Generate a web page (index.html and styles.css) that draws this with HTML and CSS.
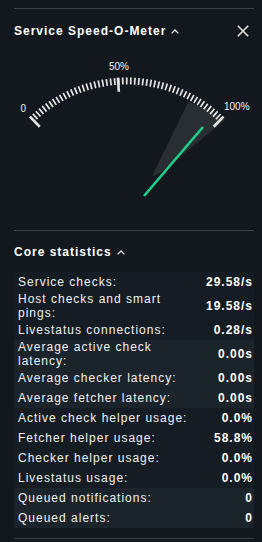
FILE: index.html
```html
<!DOCTYPE html>
<html lang="en">
<head>
    <meta charset="UTF-8"/>
    <meta name="viewport" content="width=device-width, initial-scale=1.0"/>
    <title>Sidebar</title>
    <link rel="stylesheet" href="styles.css">
</head>
<body>
<div class="sidebar">
    <div class="snapin speed">
        <div class="snapin-head">
            <span class="snapin-title">Service Speed-O-Meter
                <svg class="chevron" viewBox="0 0 8 5"><path d="M0.6 4.4 L4 1 L7.4 4.4"/></svg>
            </span>
            <svg class="close" viewBox="0 0 12 12"><path d="M0.8 0.8 L11.2 11.2 M11.2 0.8 L0.8 11.2"/></svg>
        </div>
        <svg class="speedometer" width="240" height="160" viewBox="0 0 240 160">
            <path class="optimal" d="M137.7 138.7 L174.3 63.7 A135 135 0 0 1 211 82 L146 135 Z"/>
            <path class="ticks" d="M18.41 81.2 A135.5 135.5 0 0 1 206.99 81.2"/>
            <line class="major" x1="15.97" y1="78.68" x2="25.71" y2="88.74"/>
            <line class="major" x1="103.97" y1="39.78" x2="104.85" y2="53.75"/>
            <line class="major" x1="209.43" y1="78.68" x2="199.69" y2="88.74"/>
            <text class="label" x="6.5" y="74">0</text>
            <text class="label" x="95" y="32">50%</text>
            <text class="label" x="210" y="72">100%</text>
            <line class="needle" x1="130" y1="158" x2="189" y2="89"/>
        </svg>
    </div>
    <div class="snapin stats-snapin">
        <div class="snapin-head">
            <span class="snapin-title">Core statistics
                <svg class="chevron" viewBox="0 0 8 5"><path d="M0.6 4.4 L4 1 L7.4 4.4"/></svg>
            </span>
        </div>
        <table class="stats">
            <tbody class="group-a">
            <tr><td>Service checks:</td><td class="value">29.58/s</td></tr>
            <tr><td>Host checks and smart pings:</td><td class="value">19.58/s</td></tr>
            <tr><td>Livestatus connections:</td><td class="value">0.28/s</td></tr>
            </tbody>
            <tbody class="group-b">
            <tr><td>Average active check latency:</td><td class="value">0.00s</td></tr>
            <tr><td>Average checker latency:</td><td class="value">0.00s</td></tr>
            <tr><td>Average fetcher latency:</td><td class="value">0.00s</td></tr>
            </tbody>
            <tbody class="group-a">
            <tr><td>Active check helper usage:</td><td class="value">0.0%</td></tr>
            <tr><td>Fetcher helper usage:</td><td class="value">58.8%</td></tr>
            <tr><td>Checker helper usage:</td><td class="value">0.0%</td></tr>
            <tr><td>Livestatus usage:</td><td class="value">0.0%</td></tr>
            </tbody>
            <tbody class="group-b">
            <tr><td>Queued notifications:</td><td class="value">0</td></tr>
            <tr><td>Queued alerts:</td><td class="value">0</td></tr>
            </tbody>
        </table>
    </div>
</div>
</body>
</html>
```

FILE: styles.css
```css
* {
    margin: 0;
    padding: 0;
}

body {
    background-color: #12181e;
    color: #ffffff;
    font-family: 'Liberation Sans', Arial, sans-serif;
    font-size: 12px;
    letter-spacing: 1px;
}

.sidebar {
    padding: 8px 8px 0 14px;
}

.snapin {
    border-top: 1px solid #3c4146;
}

.snapin-head {
    display: flex;
    align-items: center;
    justify-content: space-between;
    height: 14px;
    line-height: 14px;
    padding-top: 15px;
}

.snapin-title {
    display: flex;
    align-items: center;
    font-weight: bold;
}

.chevron {
    width: 8px;
    height: 5px;
    margin-left: 5px;
    fill: none;
    stroke: #e8e8e8;
    stroke-width: 1.3;
}

.close {
    width: 12px;
    height: 12px;
    margin-right: 5px;
    fill: none;
    stroke: #e4e4e4;
    stroke-width: 1.6;
}

/* speedometer */
.speed {
    padding-bottom: 32px;
}

.speedometer {
    display: block;
}

.optimal {
    fill: #282e32;
}

.ticks {
    fill: none;
    stroke: #e6e6e6;
    stroke-width: 7;
    stroke-dasharray: 1.7 2.31;
    stroke-dashoffset: 0.85;
}

.major {
    stroke: #e6e6e6;
    stroke-width: 2.6;
}

.label {
    fill: #f2f2f2;
    font-size: 10px;
    letter-spacing: 0;
}

.needle {
    stroke: #1fcf8a;
    stroke-width: 2.6;
}

/* core statistics */
.stats-snapin {
    padding-bottom: 10px;
    border-bottom: 1px solid #3c4146;
}

.stats-snapin .snapin-head {
    padding-top: 14px;
}

.stats {
    width: 100%;
    margin-top: 13px;
    border-collapse: collapse;
}

.stats td {
    height: 20px;
    padding: 0 4px;
    line-height: 14px;
    vertical-align: middle;
    color: #f2f2f2;
}

.stats td.value {
    width: 1px;
    padding: 0 1px 0 4px;
    text-align: right;
    white-space: nowrap;
    font-weight: bold;
    color: #ffffff;
}

.group-a {
    background-color: #151c23;
}

.group-b {
    background-color: #1b232b;
}
```
